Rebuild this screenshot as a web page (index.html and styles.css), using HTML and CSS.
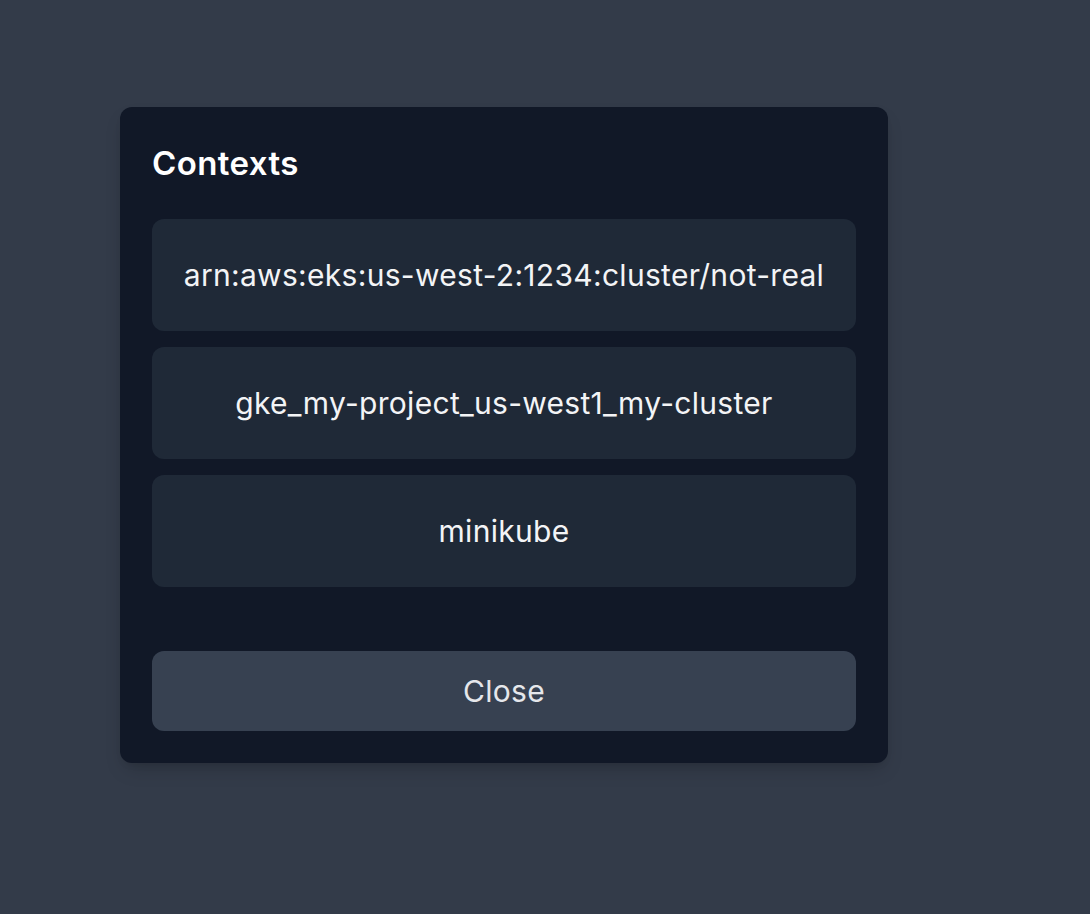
FILE: index.html
```html
<!DOCTYPE html>
<html lang="en">
<head>
<meta charset="utf-8">
<title>Contexts</title>
<link rel="stylesheet" href="styles.css">
</head>
<body>
<div class="page">
  <div class="modal">
    <h2 class="title">Contexts</h2>
    <div class="list">
      <button class="item">arn:aws:eks:us-west-2:1234:cluster/not-real</button>
      <button class="item">gke_my-project_us-west1_my-cluster</button>
      <button class="item">minikube</button>
    </div>
    <button class="close">Close</button>
  </div>
</div>
</body>
</html>
```
FILE: styles.css
```css
html, body {
  margin: 0;
  padding: 0;
  background: #333b49;
  height: 100%;
}
body {
  font-family: Inter, "Noto Sans", sans-serif;
}
.page {
  padding: 107px 0 0 120px;
}
.modal {
  width: 768px;
  box-sizing: border-box;
  padding: 32px;
  background: #111827;
  border-radius: 12px;
  box-shadow: 0 10px 20px -5px rgba(0,0,0,0.18), 0 4px 8px -4px rgba(0,0,0,0.12);
  display: flex;
  flex-direction: column;
}
.title {
  margin: 0 0 32px 0;
  font-size: 33px;
  line-height: 48px;
  font-weight: 600;
  letter-spacing: 0.4px;
  color: #ffffff;
}
.list {
  display: flex;
  flex-direction: column;
  gap: 16px;
}
.item {
  font-family: inherit;
  border: none;
  background: #1f2937;
  color: #f3f4f6;
  border-radius: 12px;
  height: 112px;
  padding: 0 16px;
  font-size: 30px;
  letter-spacing: 0.3px;
  line-height: 48px;
  text-align: center;
}
.close {
  font-family: inherit;
  border: none;
  margin-top: 64px;
  height: 80px;
  background: #374151;
  color: #e5e7eb;
  border-radius: 12px;
  font-size: 30px;
  letter-spacing: 0.3px;
  line-height: 48px;
  text-align: center;
}
```
